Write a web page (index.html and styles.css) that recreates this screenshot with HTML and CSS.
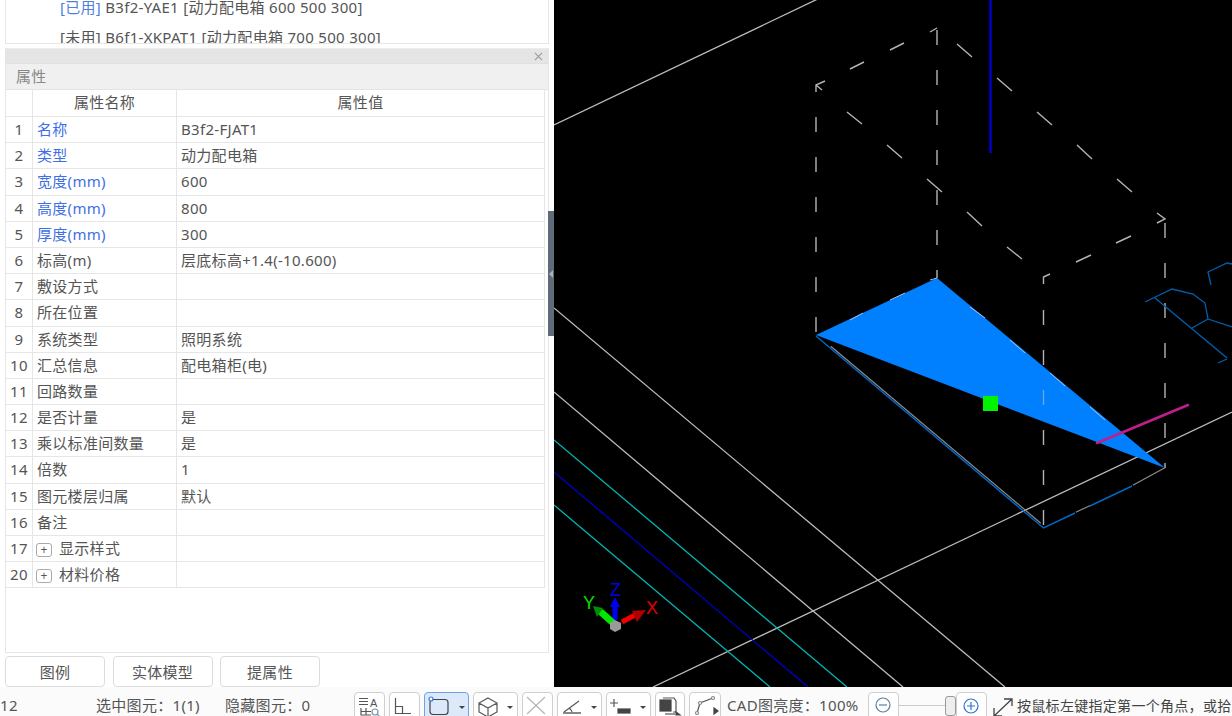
FILE: index.html
```html
<!DOCTYPE html>
<html lang="zh-CN">
<head>
  <meta charset="UTF-8" />
  <title>属性</title>
  <link rel="stylesheet" href="styles.css">
</head>
<body>
  <div class="main">
    <div class="side">
      <div class="list-box">
        <div class="list-row"><span class="used">[已用]</span> B3f2-YAE1 [动力配电箱 600 500 300]</div>
        <div class="list-row">[未用] B6f1-XKPAT1 [动力配电箱 700 500 300]</div>
      </div>

      <div class="prop-panel">
        <div class="panel-strip">
          <svg class="close-x" viewBox="0 0 10 10"><path d="M1 1L9 9M9 1L1 9"/></svg>
        </div>
        <div class="panel-title">属性</div>
        <div class="prop-grid">
          <div class="cell no"></div><div class="cell head">属性名称</div><div class="cell head">属性值</div>
          <div class="cell no">1</div><div class="cell name link">名称</div><div class="cell val">B3f2-FJAT1</div>
          <div class="cell no">2</div><div class="cell name link">类型</div><div class="cell val">动力配电箱</div>
          <div class="cell no">3</div><div class="cell name link">宽度(mm)</div><div class="cell val">600</div>
          <div class="cell no">4</div><div class="cell name link">高度(mm)</div><div class="cell val">800</div>
          <div class="cell no">5</div><div class="cell name link">厚度(mm)</div><div class="cell val">300</div>
          <div class="cell no">6</div><div class="cell name">标高(m)</div><div class="cell val">层底标高+1.4(-10.600)</div>
          <div class="cell no">7</div><div class="cell name">敷设方式</div><div class="cell val"></div>
          <div class="cell no">8</div><div class="cell name">所在位置</div><div class="cell val"></div>
          <div class="cell no">9</div><div class="cell name">系统类型</div><div class="cell val">照明系统</div>
          <div class="cell no">10</div><div class="cell name">汇总信息</div><div class="cell val">配电箱柜(电)</div>
          <div class="cell no">11</div><div class="cell name">回路数量</div><div class="cell val"></div>
          <div class="cell no">12</div><div class="cell name">是否计量</div><div class="cell val">是</div>
          <div class="cell no">13</div><div class="cell name">乘以标准间数量</div><div class="cell val">是</div>
          <div class="cell no">14</div><div class="cell name">倍数</div><div class="cell val">1</div>
          <div class="cell no">15</div><div class="cell name">图元楼层归属</div><div class="cell val">默认</div>
          <div class="cell no">16</div><div class="cell name">备注</div><div class="cell val"></div>
          <div class="cell no">17</div><div class="cell name"><span class="plus-box">+</span>显示样式</div><div class="cell val"></div>
          <div class="cell no">20</div><div class="cell name"><span class="plus-box">+</span>材料价格</div><div class="cell val"></div>
        </div>
      </div>

      <div class="side-btns">
        <button class="side-btn">图例</button>
        <button class="side-btn">实体模型</button>
        <button class="side-btn">提属性</button>
      </div>
    </div>

    <div class="splitter"><span class="splitter-arrow"></span></div>

    <div class="canvas">
      <svg class="drawing" viewBox="554 0 678 687">
        <!-- axis lines -->
        <g class="ln-white">
          <path d="M554 125L824 -4"/>
          <path d="M554 308L1005 687"/>
          <path d="M554 392L903 687"/>
          <path d="M653 687L1232 412"/>
        </g>
        <path class="ln-cyan" d="M554 440L847 687M554 505L770 687"/>
        <path class="ln-navy" d="M554 472L808 687"/>
        <path class="ln-axis" d="M990.5 0V153"/>

        <!-- dashed box -->
        <g class="ln-dash">
          <path class="dashed" d="M816 117V335"/>
          <path class="dashed" d="M937 30V278"/>
          <path class="dashed" d="M1165 223V468"/>
          <path class="dashed" d="M1043.500 310V527"/>
          <path d="M816 92V85L825 81M816 85L822 90M1043.500 284V277L1050 274"/>
          <path d="M850 69L864 62M890 50L904 43M930 32L937 28"/>
          <path d="M847 112L862 124M887 145L902 158M927 179L942 192M967 212L982 226M1007 247L1022 259"/>
          <path d="M957 44L972 57M997 78L1012 91M1037 112L1052 125M1077 145L1092 159M1117 179L1132 192M1157 213L1165 219L1157 223"/>
          <path d="M1076 262L1091 255M1116 243L1131 236"/>
        </g>

        <path class="floor-white" d="M830 347L1040 524M1075 513L1090 506M1132 486L1165 468"/>
        <path class="floor-blue" d="M816 336L1043.500 528L1075 513M1090 506L1132 486"/>
        <path class="tri" d="M816 335L937 278L1165 468Z"/>
        <path class="tri-dash" d="M850 320L863 313M890 300L905 293M930 280L937 278M970 307L985 318M1010 340L1025 353M1050 373L1065 386M1090 407L1105 420"/>
        <path class="ln-white" d="M1043.500 390V405" opacity="0.6"/>
        <path class="ln-pink" d="M1097 443L1188 405"/>
        <rect class="grip" x="983" y="396" width="15" height="15"/>

        <path class="ln-cad" d="M1145 302L1172 289L1193 294L1205 303L1208 319L1192 328M1208 319L1232 327M1155 298L1227 358M1218 363L1227 359M1211 285L1208 272L1227 263L1232 264"/>

        <!-- axis gizmo -->
        <path class="giz-z" d="M615 620V607"/>
        <path class="giz-z-head" d="M610 607L615 597L620 607Z"/>
        <path class="giz-y" d="M612 622L602 613"/>
        <path class="giz-y-head" d="M593 606L603 608L597 617Z"/>
        <path class="giz-x" d="M622 622L635 615"/>
        <path class="giz-x-head" d="M646 610L637 622L632 611Z"/>
        <path class="giz-o" d="M615 620L621 623V629L615 632L610 629V623Z"/>
        <text class="giz-txt" x="610" y="596" fill="#0000e0">Z</text>
        <text class="giz-txt" x="583" y="609" fill="#00e000">Y</text>
        <text class="giz-txt" x="646" y="614" fill="#e00000">X</text>
      </svg>
    </div>
  </div>

  <div class="status">
    <span class="st-text st-count">12</span>
    <span class="st-text st-sel">选中图元：1(1)</span>
    <span class="st-text st-hid">隐藏图元：0</span>

    <div class="tool-group">
      <div class="tool w31">
        <svg viewBox="0 0 29 28"><path d="M4 5.500H13M4 8.500H13M4 11.500H13M6 15V22H16M11 15V22M6 18.500H16"/><text class="tool-a" x="15" y="14">A</text><circle cx="20" cy="19" r="3" class="ic-blue"/><path class="ic-blue" d="M22 21L25 24"/></svg>
      </div>
      <div class="tool w31">
        <svg viewBox="0 0 29 28"><path d="M5.500 5V20.500H21M5.500 13.500H12.500V20.500"/></svg>
      </div>
      <div class="tool w45 on">
        <svg viewBox="0 0 43 28"><rect x="5" y="6.500" width="18" height="15" rx="3" class="ic-sel"/><circle cx="6" cy="6" r="2" class="ic-dot"/><path class="caret" d="M34 13H40L37 16Z"/></svg>
      </div>
      <div class="tool w45">
        <svg viewBox="0 0 43 28"><path d="M14 5L23 10V19L14 24L5 19V10ZM5 10L14 15L23 10M14 15V24"/><path class="caret" d="M33 13H39L36 16Z"/></svg>
      </div>
      <div class="tool w31 off">
        <svg viewBox="0 0 29 28"><path d="M4 4L22 21M22 4L4 21"/></svg>
      </div>
      <div class="tool w45">
        <svg viewBox="0 0 43 28"><path d="M6 19L21 8M11 15Q14 17 14 20"/><path class="ic-bar" d="M5 19H23V21H5Z"/><path class="caret" d="M33 13H39L36 16Z"/></svg>
      </div>
      <div class="tool w45">
        <svg viewBox="0 0 43 28"><path d="M7 6V14M3 10H11"/><rect class="ic-dark" x="11" y="16" width="12" height="4"/><path class="caret" d="M33 13H39L36 16Z"/></svg>
      </div>
      <div class="tool w30">
        <svg viewBox="0 0 28 28"><path d="M7 5H18L20 8V19H17"/><rect class="ic-dark" x="4" y="7" width="11" height="11"/><path d="M9 21H19"/><path class="ic-dark" d="M20 19L24 22H20Z"/></svg>
      </div>
      <div class="tool w32">
        <svg viewBox="0 0 30 28"><path d="M7 20L10 10L23 5"/><circle class="ic-node" cx="7" cy="20" r="1.500"/><circle class="ic-node" cx="10" cy="10" r="1.500"/><circle class="ic-node" cx="23" cy="5" r="1.500"/><path class="ic-dark" d="M24 15L28 18L24 21Z"/></svg>
      </div>
    </div>

    <span class="st-text st-bright">CAD图亮度：100%</span>

    <div class="tool w31">
      <svg viewBox="0 0 29 28"><circle class="ic-zoom" cx="14" cy="12" r="7"/><path class="ic-zoom" d="M10 12H18"/></svg>
    </div>
    <div class="slider"><span class="slider-thumb"></span></div>
    <div class="tool w31">
      <svg viewBox="0 0 29 28"><circle class="ic-zoom on-blue" cx="14" cy="13" r="7"/><path class="ic-zoom on-blue" d="M10 13H18M14 9V17"/></svg>
    </div>

    <svg class="expand" viewBox="0 0 20 20"><path d="M1 19L19 2M11 2H19V9M1 11V19H9"/></svg>
    <span class="st-text st-hint">按鼠标左键指定第一个角点，或拾取构件图元</span>
  </div>
</body>
</html>
```

FILE: styles.css
```css
* {
  box-sizing: border-box;
  margin: 0;
  padding: 0;
}
body {
  width: 1232px;
  height: 716px;
  overflow: hidden;
  background: #fff;
  color: #555;
  font-family: "Noto Sans", "Noto Sans CJK SC", sans-serif;
  font-size: 15px;
  letter-spacing: 0.3px;
}
.main {
  display: flex;
  height: 687px;
  position: relative;
}

/* left side */
.side {
  width: 554px;
  padding: 0 5px;
  flex: none;
}
.list-box {
  height: 44px;
  overflow: hidden;
  border: 1px solid #e6e6e6;
  border-top: none;
  padding-left: 54px;
}
.list-row {
  height: 30px;
  line-height: 15px;
  white-space: nowrap;
}
.used {
  color: #4d7fe0;
}
.prop-panel {
  height: 605px;
  margin-top: 4px;
  border: 1px solid #e6e6e6;
  border-top: none;
}
.panel-strip {
  height: 15px;
  background: #e5e5e5;
  border-top: 1px solid #ececec;
  display: flex;
  justify-content: flex-end;
  align-items: center;
  padding-right: 5px;
}
.close-x {
  width: 9px;
  height: 9px;
  fill: none;
  stroke: #999;
  stroke-width: 1.2;
}
.panel-title {
  height: 27px;
  line-height: 24px;
  padding-left: 10px;
  background: #f0f0f0;
  border-top: 1px solid #e0e0e0;
  border-bottom: 1px solid #e4e4e4;
  color: #888;
}
.prop-grid {
  display: grid;
  grid-template-columns: 27px 144px 368px;
  grid-template-rows: 27px;
  grid-auto-rows: 26.2px;
}
.cell {
  border-right: 1px solid #e6e6e6;
  border-bottom: 1px solid #e6e6e6;
  line-height: 25px;
  white-space: nowrap;
  overflow: hidden;
}
.no {
  text-align: center;
}
.head {
  text-align: center;
}
.name, .val {
  padding-left: 4px;
}
.link {
  color: #3f6fe6;
}
.plus-box {
  display: inline-block;
  width: 16px;
  height: 14px;
  line-height: 11px;
  margin: 0 7px 0 -1px;
  border: 1px solid #aaa;
  border-radius: 3px;
  text-align: center;
  font-size: 12px;
  vertical-align: 0;
}
.side-btns {
  display: flex;
  gap: 7.5px;
  margin-top: 3px;
}
.side-btn {
  width: 100px;
  height: 31px;
  background: #fff;
  border: 1px solid #dcdcdc;
  border-radius: 4px;
  color: #555;
  font: inherit;
  letter-spacing: inherit;
}

.splitter {
  position: absolute;
  left: 548px;
  top: 211px;
  width: 6px;
  height: 125px;
  background: #5f6b78;
  display: flex;
  align-items: center;
}
.splitter-arrow {
  width: 0;
  height: 0;
  margin-left: 1px;
  border: 4px solid transparent;
  border-left: none;
  border-right-color: #a9b0b8;
}

/* drawing */
.canvas {
  flex: 1;
  background: #000;
}
.drawing {
  display: block;
  width: 678px;
  height: 687px;
  fill: none;
}
.ln-white {
  stroke: #bcbcbc;
  stroke-width: 1.3;
}
.ln-cyan {
  stroke: #00b4b4;
  stroke-width: 1.3;
}
.ln-navy {
  stroke: #0000c8;
  stroke-width: 1.3;
}
.ln-axis {
  stroke: #0000c8;
  stroke-width: 2.5;
}
.ln-dash {
  stroke: #b4b4b4;
  stroke-width: 1.4;
}
.dashed {
  stroke-dasharray: 15 25;
}
.floor-white {
  stroke: #8c8c8c;
  stroke-width: 1.2;
  transform: translate(0.8px, -0.8px);
}
.floor-blue {
  stroke: #0068c8;
  stroke-width: 1.4;
}
.tri {
  fill: #0080ff;
}
.tri-dash {
  stroke: #a8c0d8;
  stroke-width: 1;
}
.ln-pink {
  stroke: #c01e8c;
  stroke-width: 2.5;
  stroke-linecap: round;
}
.grip {
  fill: #00f400;
}
.ln-cad {
  stroke: #0060b0;
  stroke-width: 1.3;
}
.giz-z {
  stroke: #0000f0;
  stroke-width: 5;
}
.giz-z-head {
  fill: #0000f0;
}
.giz-y {
  stroke: #00e800;
  stroke-width: 7;
  stroke-linecap: round;
}
.giz-y-head {
  fill: #009000;
}
.giz-x {
  stroke: #f00000;
  stroke-width: 5;
}
.giz-x-head {
  fill: #b00000;
}
.giz-o {
  fill: #9a9a9a;
}
.giz-txt {
  font-family: "Liberation Sans", sans-serif;
  font-size: 18px;
  letter-spacing: 0;
}

/* status bar */
.status {
  height: 29px;
  padding-top: 5px;
  display: flex;
  overflow: hidden;
  white-space: nowrap;
  background: #fbfbfb;
}
.st-text {
  line-height: 27px;
  flex: none;
}
.st-count {
  width: 96px;
}
.st-sel {
  width: 129px;
}
.st-hid {
  width: 129px;
}
.tool-group {
  display: flex;
  gap: 4px;
  flex: none;
}
.tool {
  height: 30px;
  flex: none;
  background: #fff;
  border: 1px solid #cfcfcf;
  border-radius: 4px;
}
.tool svg {
  display: block;
  width: 100%;
  height: 28px;
  fill: none;
  stroke: #555;
  stroke-width: 1.2;
}
.w30 { width: 30px; }
.w31 { width: 31px; }
.w32 { width: 32px; }
.w45 { width: 45px; }
.tool.on {
  background: #dbe9fa;
  border-color: #6fa3e8;
}
.tool.off svg {
  stroke: #b5b5b5;
}
.tool .caret {
  fill: #444;
  stroke: none;
}
.tool .tool-a {
  font-family: "Liberation Sans", sans-serif;
  font-size: 11px;
  fill: #555;
  stroke: none;
}
.tool .ic-blue {
  stroke: #7d93a8;
}
.tool .ic-sel {
  stroke: #444;
}
.tool .ic-dot {
  fill: #fff;
  stroke: #2f7de0;
}
.tool .ic-bar {
  fill: #888;
  stroke: none;
}
.tool .ic-dark {
  fill: #444;
  stroke: #444;
}
.tool .ic-node {
  fill: #fff;
  stroke: #888;
}
.tool .ic-zoom {
  stroke: #5f7f9f;
}
.tool .on-blue {
  stroke: #2f74d0;
}
.st-bright {
  width: 141px;
  margin-left: 6px;
}
.slider {
  width: 57px;
  height: 20px;
  margin-top: 4px;
  flex: none;
  display: flex;
  justify-content: flex-end;
  align-items: center;
  background: linear-gradient(#ccc, #ccc) 0 9px / 46px 1px no-repeat;
}
.slider-thumb {
  width: 11px;
  height: 20px;
  background: #eee;
  border: 1px solid #999;
  border-radius: 3px;
}
.expand {
  width: 20px;
  height: 20px;
  margin: 5px 4px 0 6px;
  flex: none;
  fill: none;
  stroke: #444;
  stroke-width: 1.3;
}
.st-hint {
  font-size: 14px;
  color: #444;
}
```
